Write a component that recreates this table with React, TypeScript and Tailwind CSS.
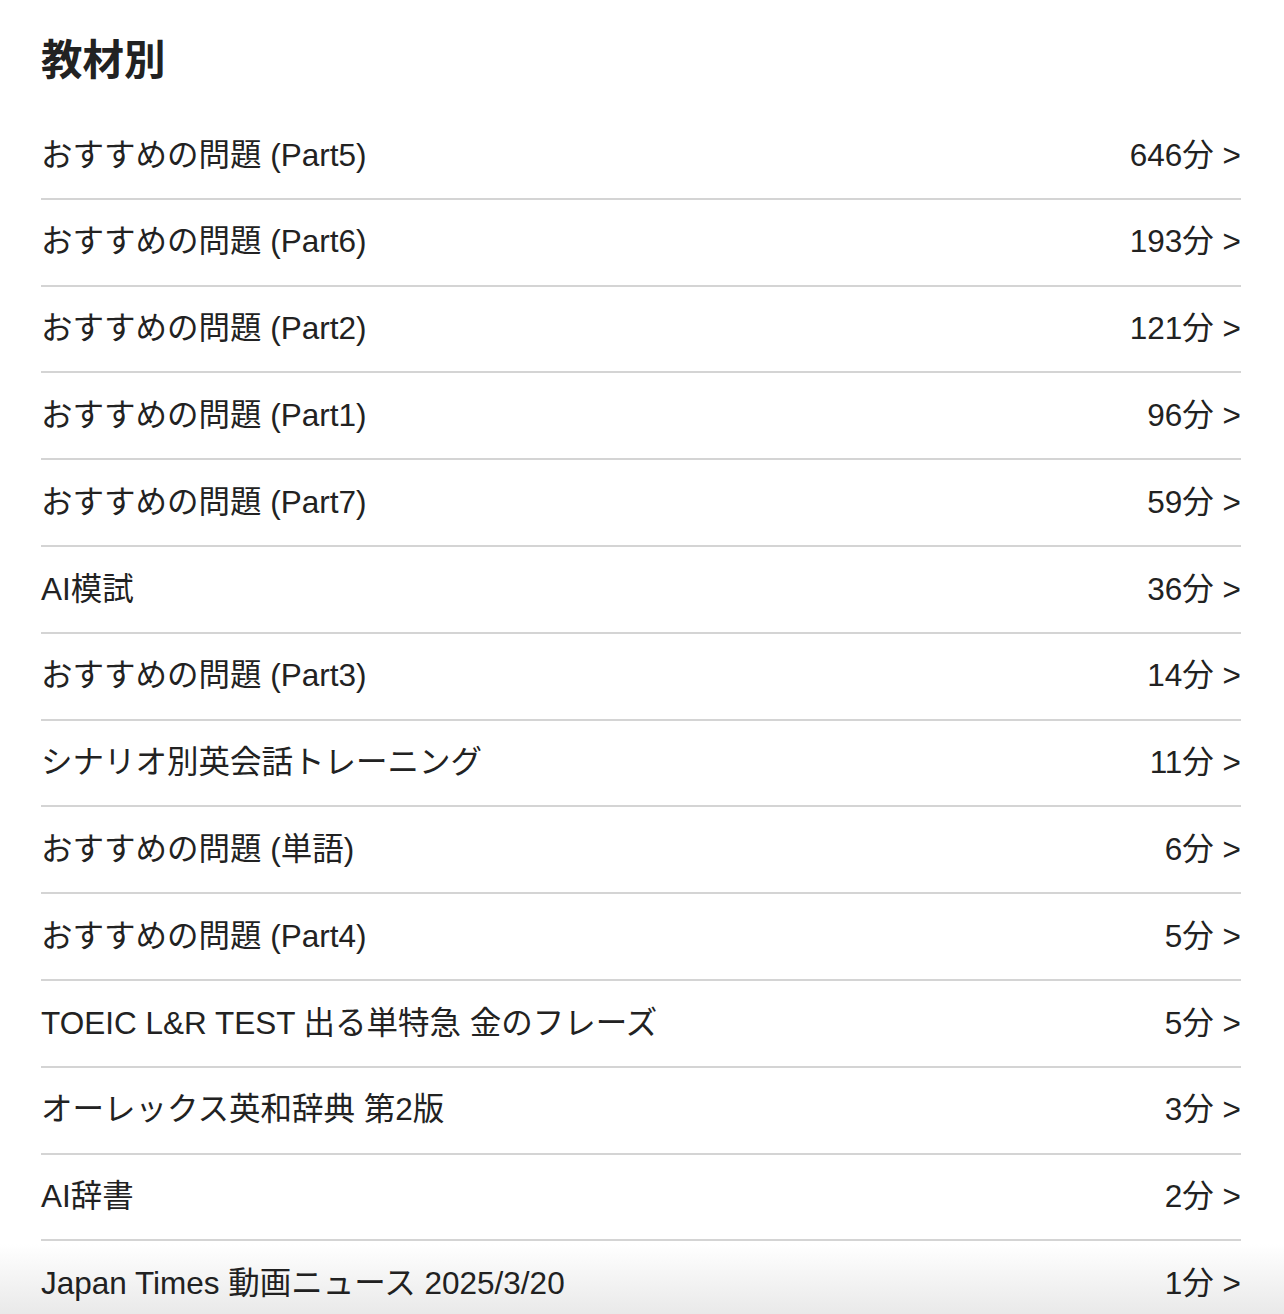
import React from 'react';

type Item = { title: string; minutes: number };

const items: Item[] = [
  { title: 'おすすめの問題 (Part5)', minutes: 646 },
  { title: 'おすすめの問題 (Part6)', minutes: 193 },
  { title: 'おすすめの問題 (Part2)', minutes: 121 },
  { title: 'おすすめの問題 (Part1)', minutes: 96 },
  { title: 'おすすめの問題 (Part7)', minutes: 59 },
  { title: 'AI模試', minutes: 36 },
  { title: 'おすすめの問題 (Part3)', minutes: 14 },
  { title: 'シナリオ別英会話トレーニング', minutes: 11 },
  { title: 'おすすめの問題 (単語)', minutes: 6 },
  { title: 'おすすめの問題 (Part4)', minutes: 5 },
  { title: 'TOEIC L&R TEST 出る単特急 金のフレーズ', minutes: 5 },
  { title: 'オーレックス英和辞典 第2版', minutes: 3 },
  { title: 'AI辞書', minutes: 2 },
  { title: 'Japan Times 動画ニュース 2025/3/20', minutes: 1 },
];

const App: React.FC = () => {
  return (
    <div className="min-h-screen bg-white text-[#222] font-['Liberation_Sans','Noto_Sans_CJK_JP',sans-serif]">
      <div className="pl-[41px] pr-[43px]">
        <h2 className="pt-[37px] pb-[28px] text-[41.5px] leading-[48px] font-bold">教材別</h2>
        <ul>
          {items.map((item, i) => (
            <li
              key={i}
              className="h-[86.8px] flex items-center justify-between border-b-2 border-[#d4d4d4] text-[31.5px] leading-none"
            >
              <span>{item.title}</span>
              <span>{item.minutes}分 &gt;</span>
            </li>
          ))}
        </ul>
      </div>
      {/* fade at the bottom of the list */}
      <div className="fixed left-0 right-0 bottom-0 h-[70px] bg-gradient-to-b from-white to-[#e9e9e9] mix-blend-multiply pointer-events-none" />
    </div>
  );
};

export default App;
